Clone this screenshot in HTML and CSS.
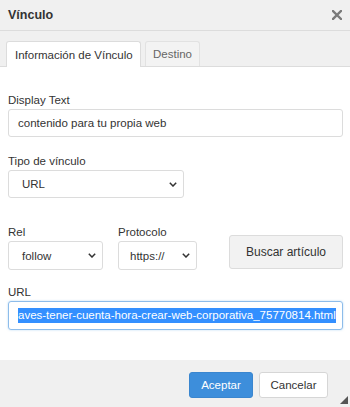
FILE: index.html
```html
<!DOCTYPE html>
<html lang="es">
<head>
<meta charset="utf-8">
<link rel="stylesheet" href="styles.css">
</head>
<body>
<div class="dialog">
  <div class="header">
    <span class="title">Vínculo</span>
    <svg class="close" width="10" height="10" viewBox="0 0 10 10"><path d="M1 1L9 9M9 1L1 9" stroke="#7a7a7a" stroke-width="2.4" stroke-linecap="square"/></svg>
  </div>
  <div class="tabs">
    <div class="tab active">Información de Vínculo</div>
    <div class="tab">Destino</div>
  </div>
  <div class="content">
    <div class="group">
      <label class="label">Display Text</label>
      <div class="input">contenido para tu propia web</div>
    </div>
    <div class="group g2">
      <label class="label">Tipo de vínculo</label>
      <div class="select w-tipo"><span>URL</span><svg width="8" height="5" viewBox="0 0 8 5"><path d="M0.8 0.8L4 4L7.2 0.8" fill="none" stroke="#333" stroke-width="1.5"/></svg></div>
    </div>
    <div class="row g3">
      <div class="group">
        <label class="label">Rel</label>
        <div class="select w-rel"><span>follow</span><svg width="8" height="5" viewBox="0 0 8 5"><path d="M0.8 0.8L4 4L7.2 0.8" fill="none" stroke="#333" stroke-width="1.5"/></svg></div>
      </div>
      <div class="group">
        <label class="label">Protocolo</label>
        <div class="select w-proto"><span>https://</span><svg width="8" height="5" viewBox="0 0 8 5"><path d="M0.8 0.8L4 4L7.2 0.8" fill="none" stroke="#333" stroke-width="1.5"/></svg></div>
      </div>
      <div class="btn search">Buscar artículo</div>
    </div>
    <div class="group g4">
      <label class="label">URL</label>
      <div class="input focus"><span class="sel">aves-tener-cuenta-hora-crear-web-corporativa_75770814.html</span></div>
    </div>
  </div>
  <div class="footer">
    <div class="btn primary">Aceptar</div>
    <div class="btn">Cancelar</div>
  </div>
  <svg class="resize" width="8" height="8" viewBox="0 0 8 8"><path d="M8 0L8 8L0 8Z" fill="#555"/></svg>
</div>
</body>
</html>
```

FILE: styles.css
```css
html, body {
  margin: 0;
  padding: 0;
}
body {
  font-family: "Liberation Sans", Arial, sans-serif;
  font-size: 11.5px;
  color: #333;
  background: #fff;
}
.dialog {
  position: relative;
  width: 350px;
  height: 407px;
  display: flex;
  flex-direction: column;
  overflow: hidden;
}
.header {
  height: 30px;
  border-bottom: 1px solid #dcdcdc;
  background: #f0f0f0;
  display: flex;
  align-items: center;
  justify-content: space-between;
  padding: 0 8px 0 8px;
}
.title {
  font-weight: bold;
  font-size: 12.5px;
  color: #333;
}
.tabs {
  background: #f0f0f0;
  height: 25px;
  padding: 10px 0 0 6px;
  border-bottom: 1px solid #dcdcdc;
  display: flex;
  gap: 4px;
}
.tab {
  height: 25px;
  box-sizing: border-box;
  padding: 0 7px;
  border: 1px solid #e2e2e2;
  border-bottom: none;
  border-radius: 3px 3px 0 0;
  background: #f3f3f3;
  color: #666;
  display: flex;
  align-items: center;
  white-space: nowrap;
}
.tab.active {
  background: #fff;
  color: #333;
  height: 26px;
  border-color: #dcdcdc;
  width: 135px;
  padding: 0 0 0 8px;
}
.content {
  flex: 1;
  padding: 26px 7px 0 8px;
  background: #fff;
}
.label {
  display: block;
  line-height: 14px;
  margin-bottom: 2px;
  color: #333;
}
.input {
  height: 28px;
  box-sizing: border-box;
  border: 1px solid #dcdcdc;
  border-radius: 3px;
  padding: 0 9px;
  display: flex;
  align-items: center;
  white-space: nowrap;
  overflow: hidden;
  color: #333;
}
.input.focus {
  height: 29px;
  border-color: #8dbcea;
  box-shadow: 0 0 2px rgba(102, 175, 233, 0.5);
  padding: 0 0 0 9px;
}
.sel {
  background: #338fff;
  color: #fff;
  line-height: 15px;
}
.g2 { margin-top: 17px; }
.select {
  height: 28px;
  box-sizing: border-box;
  border: 1px solid #dcdcdc;
  border-radius: 3px;
  padding: 0 6px 0 13px;
  display: flex;
  align-items: center;
  justify-content: space-between;
  background: #fff;
}
.w-tipo { width: 176px; }
.w-rel { width: 95px; height: 29px; }
.w-proto { width: 79px; height: 29px; padding-left: 11px; }
.row {
  display: flex;
  align-items: flex-start;
  gap: 15px;
}
.g3 { margin-top: 27px; }
.btn {
  box-sizing: border-box;
  border: 1px solid #d6d6d6;
  border-radius: 3px;
  background: #fff;
  display: flex;
  align-items: center;
  justify-content: center;
  color: #333;
}
.search {
  margin-left: auto;
  margin-top: 10px;
  width: 114px;
  height: 34px;
  background: #f2f2f2;
  border-color: #dcdcdc;
  font-size: 12px;
}
.g4 { margin-top: 15px; }
.footer {
  height: 47px;
  box-sizing: border-box;
  background: #f0f0f0;
  display: flex;
  justify-content: flex-end;
  gap: 6px;
  padding: 12px 22px 0 0;
}
.footer .btn {
  height: 26px;
  width: 69px;
}
.footer .btn.primary {
  width: 64px;
  background: #3d8edb;
  border-color: #3a86cf;
  color: #fff;
}
.resize {
  position: absolute;
  right: 2px;
  bottom: 3px;
}
```
